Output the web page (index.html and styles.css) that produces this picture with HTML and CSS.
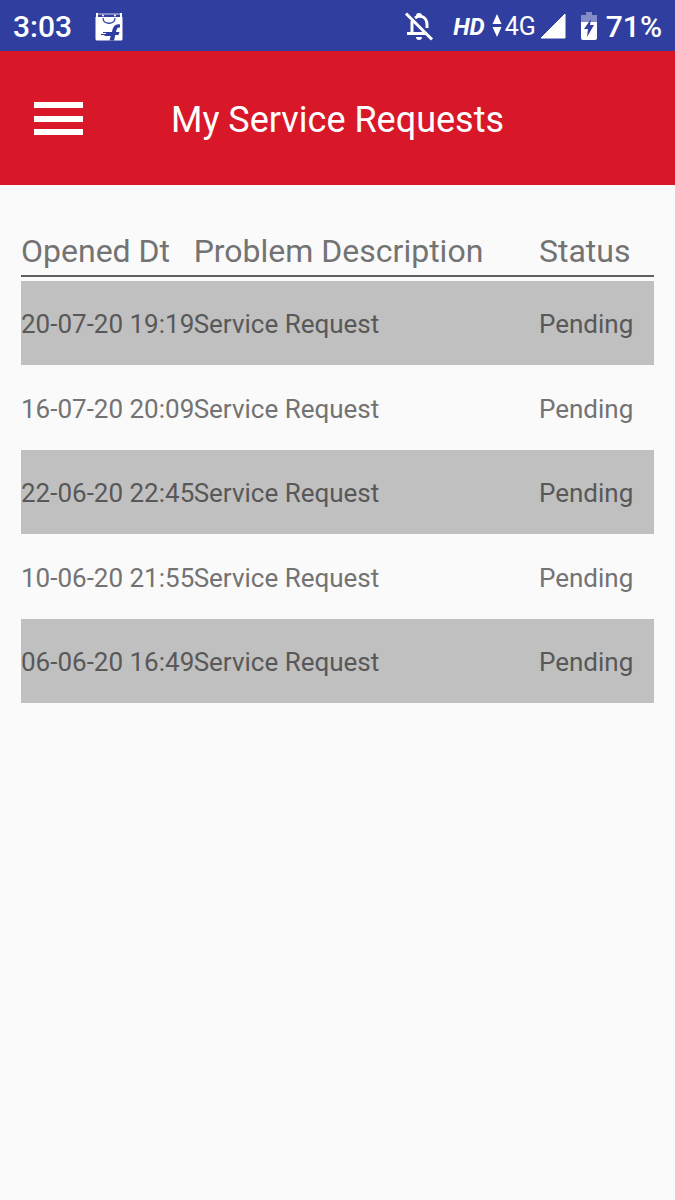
FILE: index.html
```html
<!DOCTYPE html>
<html lang="en">
<head>
<meta charset="utf-8">
<meta name="viewport" content="width=device-width, initial-scale=1">
<title>My Service Requests</title>
<link rel="stylesheet" href="styles.css">
</head>
<body>
<div class="statusbar">
  <span class="clock">3:03</span>
  <svg class="bag" width="28" height="28" viewBox="0 0 28 28" aria-hidden="true">
    <path d="M2 1h24v4H2z" fill="none" stroke="#d0d4ec" stroke-width="1"/>
    <path d="M2 0v5M26 0v5" stroke="#fff" stroke-width="2"/>
    <path d="M0.500 4h27v22a1.500 1.500 0 0 1-1.500 1.500H2a1.500 1.500 0 0 1-1.500-1.500z" fill="#fff"/>
    <circle cx="8" cy="2.500" r="1" fill="#fff"/><circle cx="20" cy="2.500" r="1" fill="#fff"/>
    <path d="M8 5c0 7 12 7 12 0" fill="none" stroke="#303f9f" stroke-width="1.300"/>
    <path d="M14.500 27.500l1.200-4.500H9.500v-1H6v-1h5v-1H8v-1h9c.8-5.500 3.500-8.500 8-7.500v3c-2.500-.5-3.500 1.500-4 4.500h3.500l-1 3h-3.200l-1.300 5.500z" fill="#303f9f"/>
  </svg>
  <div class="indicators">
    <svg class="bell" width="30" height="30" viewBox="0 0 30 30" fill="none" stroke="#fff" stroke-width="3" aria-hidden="true">
      <path d="M8 9v13M3 21.500h19M11 6q4-3 8-1 4 2 4 8v3"/>
      <path d="M2 1.500l26 26"/>
      <path d="M12 4a3 3 0 0 1 6 0zM12 25h6a3 3 0 0 1-6 0z" fill="#fff" stroke="none"/>
    </svg>
    <span class="hd">HD</span>
    <svg class="arrows" width="10" height="26" viewBox="0 0 10 26" fill="#fff" aria-hidden="true"><path d="M5 0l4.500 10h-9zM.5 13h9L5 23z"/></svg>
    <span class="network">4G</span>
    <svg class="signal" width="26" height="28" viewBox="0 0 26 28" aria-hidden="true"><path d="M25 1v24H1z" fill="#fff" stroke="#fff" stroke-linejoin="round"/></svg>
    <svg class="battery" width="16" height="30" viewBox="0 0 16 30" aria-hidden="true">
      <path d="M5 0h6v3h5v7H0V3h5z" fill="#838cc5"/>
      <path d="M0 10h16v16a2 2 0 0 1-2 2H2a2 2 0 0 1-2-2z" fill="#fff"/>
      <path d="M10 7l-1 6h4L6 25l1-8H3z" fill="#303f9f"/>
    </svg>
    <span class="percent">71%</span>
  </div>
</div>
<header class="appbar">
  <button class="menu" type="button" aria-label="Open menu">
    <svg width="50" height="36" viewBox="0 0 50 36" fill="#fff" aria-hidden="true"><path d="M1 0h49v6H1zM1 14h49v6H1zM1 27h49v6H1z"/></svg>
  </button>
  <h1 class="title">My Service Requests</h1>
</header>
<main class="content">
  <table class="requests">
    <thead><tr><th scope="col">Opened Dt</th><th scope="col">Problem Description</th><th scope="col">Status</th></tr></thead>
    <tbody>
      <tr><td>20-07-20 19:19</td><td>Service Request</td><td>Pending</td></tr>
      <tr><td>16-07-20 20:09</td><td>Service Request</td><td>Pending</td></tr>
      <tr><td>22-06-20 22:45</td><td>Service Request</td><td>Pending</td></tr>
      <tr><td>10-06-20 21:55</td><td>Service Request</td><td>Pending</td></tr>
      <tr><td>06-06-20 16:49</td><td>Service Request</td><td>Pending</td></tr>
    </tbody>
  </table>
</main>
</body>
</html>
```
FILE: styles.css
```css
body {
  margin: 0;
  background: #fafafa;
  color: #737373;
  font-family: Roboto, sans-serif;
}

.statusbar {
  display: flex;
  align-items: center;
  height: 51px;
  padding: 2px 13px 0;
  box-sizing: border-box;
  background: #303f9f;
  color: #fff;
  font-size: 30px;
  font-weight: 500;
}

.bag {
  margin-left: 23px;
}

.indicators {
  display: flex;
  align-items: center;
  margin-left: auto;
}

.hd {
  margin: 0 7px 0 19px;
  font-size: 24px;
  font-weight: 700;
  font-style: italic;
}

.network {
  margin: 0 4px 0 3px;
  font-size: 25px;
  font-weight: 400;
}

.battery {
  margin: 0 9px 0 15px;
}

.appbar {
  display: grid;
  grid-template-columns: 1fr auto 1fr;
  align-items: center;
  padding: 45px 33px 41px;
  background: #d81829;
  color: #fff;
}

.menu {
  justify-self: start;
  padding: 0;
  border: 0;
  background: none;
  cursor: pointer;
}

.menu svg {
  display: block;
}

.title {
  margin: 0;
  font-size: 36px;
  font-weight: 400;
  line-height: 48px;
  white-space: nowrap;
}

.content {
  padding: 42px 21px;
}

.requests,
.requests thead,
.requests tbody {
  display: block;
}

.requests thead {
  margin-bottom: 4px;
  border-bottom: 2px solid #606060;
}

.requests tr {
  display: grid;
  grid-template-columns: 3fr 6fr 2fr;
  align-items: center;
}

.requests th,
.requests td {
  min-width: 0;
  padding: 0;
  text-align: left;
  white-space: nowrap;
}

.requests th {
  font-size: 32px;
  font-weight: 400;
  line-height: 48px;
}

.requests td {
  padding-top: 2px;
  font-size: 26px;
  line-height: 32px;
}

.requests tbody tr {
  min-height: 84px;
}

.requests tbody tr:nth-child(odd) {
  background: #c0c0c0;
  color: #585858;
}

.requests tbody tr:nth-child(even) {
  min-height: 85px;
}
```
